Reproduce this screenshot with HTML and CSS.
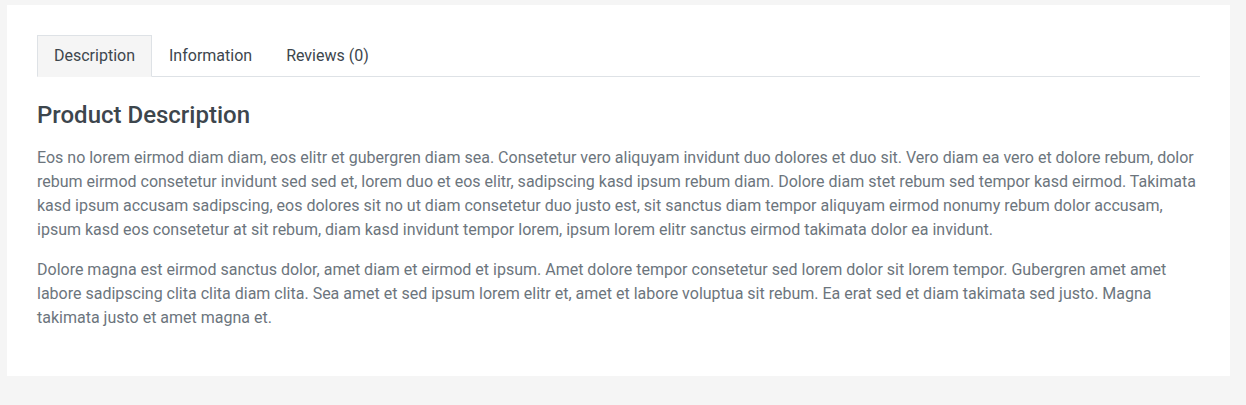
FILE: index.html
```html
<!DOCTYPE html>
<html lang="en">
<head>
<meta charset="utf-8">
<title>Product Description</title>
<link rel="stylesheet" href="styles.css">
</head>
<body>
<div class="card">
  <nav class="tabs">
    <a class="tab active">Description</a>
    <a class="tab">Information</a>
    <a class="tab">Reviews (0)</a>
  </nav>
  <div class="pane">
    <h4 class="title">Product Description</h4>
    <p>Eos no lorem eirmod diam diam, eos elitr et gubergren diam sea. Consetetur vero aliquyam invidunt duo dolores et duo sit. Vero diam ea vero et dolore rebum, dolor rebum eirmod consetetur invidunt sed sed et, lorem duo et eos elitr, sadipscing kasd ipsum rebum diam. Dolore diam stet rebum sed tempor kasd eirmod. Takimata kasd ipsum accusam sadipscing, eos dolores sit no ut diam consetetur duo justo est, sit sanctus diam tempor aliquyam eirmod nonumy rebum dolor accusam, ipsum kasd eos consetetur at sit rebum, diam kasd invidunt tempor lorem, ipsum lorem elitr sanctus eirmod takimata dolor ea invidunt.</p>
    <p>Dolore magna est eirmod sanctus dolor, amet diam et eirmod et ipsum. Amet dolore tempor consetetur sed lorem dolor sit lorem tempor. Gubergren amet amet labore sadipscing clita clita diam clita. Sea amet et sed ipsum lorem elitr et, amet et labore voluptua sit rebum. Ea erat sed et diam takimata sed justo. Magna takimata justo et amet magna et.</p>
  </div>
</div>
</body>
</html>
```
FILE: styles.css
```css
* { box-sizing: border-box; }
html, body { margin: 0; }
body {
  background: #f5f5f5;
  padding: 5px 16px 0 7px;
  font-family: Roboto, "Liberation Sans", sans-serif;
  font-size: 16px;
  line-height: 24px;
  color: #6c757d;
}
.card {
  background: #fff;
  padding: 30px;
}
.tabs {
  display: flex;
  border-bottom: 1px solid #dee2e6;
  margin-bottom: 24px;
}
.tab {
  display: block;
  padding: 8px 16px;
  border: 1px solid transparent;
  margin-bottom: -1px;
  color: #3d464d;
  cursor: pointer;
}
.tab.active {
  background: #f5f5f5;
  border-color: #dee2e6 #dee2e6 #f5f5f5;
}
.title {
  margin: 0 0 16px;
  font-size: 24px;
  font-weight: 500;
  line-height: 1.2;
  color: #3d464d;
}
.pane p {
  margin: 0 0 16px;
}
```
